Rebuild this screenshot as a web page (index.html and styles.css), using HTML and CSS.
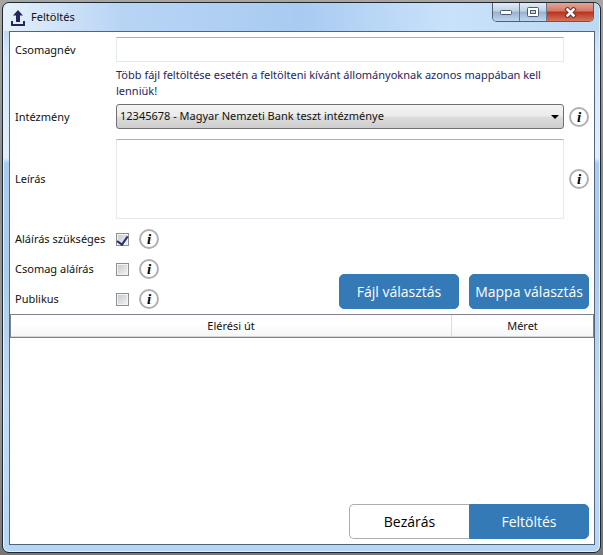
FILE: index.html
```html
<!DOCTYPE html>
<html lang="hu">
<head>
<meta charset="utf-8">
<title>Feltöltés</title>
<link rel="stylesheet" href="styles.css">
</head>
<body>
<div class="window">
  <header class="titlebar">
    <svg class="app-icon" viewBox="0 0 14 16" aria-hidden="true"><path d="M7 0 12 5.500H9V12H5V5.500H2Z M0 11H2V14H12V11H14V16H0Z" fill="#24265c"/></svg>
    <h1 class="title">Feltöltés</h1>
    <div class="controls">
      <button class="control" type="button" aria-label="Kis méret"><svg width="13" height="6" viewBox="0 0 13 6"><rect x=".5" y="1.500" width="11" height="4" rx="1" fill="#fff" stroke="#4d5a70"/></svg></button>
      <button class="control" type="button" aria-label="Teljes méret"><svg width="12" height="10" viewBox="0 0 12 10"><rect x=".5" y=".5" width="11" height="9" rx="1" fill="#fff" stroke="#4d5a70"/><rect x="3.500" y="3.500" width="5" height="3" fill="#c3d5ea" stroke="#4d5a70"/></svg></button>
      <button class="control close" type="button" aria-label="Bezárás"><svg width="13" height="11" viewBox="0 0 13 11"><path d="M3.500 2.500 9.500 8.500M9.500 2.500 3.500 8.500" stroke="#5f3438" stroke-width="4.500" stroke-linecap="square"/><path d="M3.500 2.500 9.500 8.500M9.500 2.500 3.500 8.500" stroke="#fff" stroke-width="2.500" stroke-linecap="square"/></svg></button>
    </div>
  </header>
  <main class="client">
    <form class="form">
      <label class="label" for="name">Csomagnév</label>
      <input class="field" id="name" type="text">
      <p class="hint">Több fájl feltöltése esetén a feltölteni kívánt állományoknak azonos mappában kell lenniük!</p>
      <label class="label" for="inst">Intézmény</label>
      <div class="select-wrap">
        <select class="select" id="inst"><option>12345678 - Magyar Nemzeti Bank teszt intézménye</option></select>
      </div>
      <button class="info" type="button">i</button>
      <label class="label" for="desc">Leírás</label>
      <textarea class="field area" id="desc"></textarea>
      <button class="info" type="button">i</button>
    </form>
    <div class="options">
      <div class="checks">
        <div class="check-row"><label class="label" for="sign">Aláírás szükséges</label><input class="check" id="sign" type="checkbox" checked><button class="info" type="button">i</button></div>
        <div class="check-row"><label class="label" for="pack">Csomag aláírás</label><input class="check" id="pack" type="checkbox"><button class="info" type="button">i</button></div>
        <div class="check-row"><label class="label" for="pub">Publikus</label><input class="check" id="pub" type="checkbox"><button class="info" type="button">i</button></div>
      </div>
      <div class="pickers">
        <button class="btn primary" type="button">Fájl választás</button>
        <button class="btn primary" type="button">Mappa választás</button>
      </div>
    </div>
    <table class="files">
      <thead><tr><th>Elérési út</th><th class="size">Méret</th></tr></thead>
      <tbody></tbody>
    </table>
    <footer class="actions">
      <button class="btn plain" type="button">Bezárás</button>
      <button class="btn primary" type="button">Feltöltés</button>
    </footer>
  </main>
</div>
</body>
</html>
```
FILE: styles.css
```css
* { box-sizing: border-box; }

body {
  margin: 0;
  height: 100vh;
  padding: 2px;
  background: linear-gradient(#a5a6a3, #8b8e90 30%, #9a9a98 70%, #777876);
  font: 11px/16px "Noto Sans", "Open Sans", sans-serif;
  color: #111;
}

button, input, select, textarea { font: inherit; color: inherit; margin: 0; }

.window {
  height: 100%;
  display: flex;
  flex-direction: column;
  padding: 0 5px 7px 6px;
  border: 1px solid #20272f;
  border-radius: 7px;
  background: linear-gradient(#c4dcf5 0, #b9d5f2 20px, #d3e7fa 50px, #e2eefb 155px, #a9cdf1 160px, #a9cbed 260px, #c2dcf5 400px, #b5d6f5);
  box-shadow: inset 0 0 0 1px #e4f4ff;
}

.titlebar {
  height: 28px;
  flex: none;
  display: flex;
  align-items: flex-start;
  background: linear-gradient(90deg, #e5f0fb, #b7d4f5 20%, #a9cbf1 50%, #c9e2fb 75%, #bcd8f3);
  margin: 0 -4px 0 -5px;
  padding: 0 5px;
  border-radius: 6px 6px 0 0;
}

.app-icon { width: 14px; height: 16px; margin: 7px 6px 0 2px; }
.title { margin: 6px 0 0; font-size: 11px; font-weight: 400; }

.controls {
  display: flex;
  margin-left: auto;
  border: 1px solid #515e70;
  border-top: 0;
  border-radius: 0 0 5px 5px;
  overflow: hidden;
}

.control {
  width: 27px;
  height: 18px;
  padding: 0;
  display: flex;
  align-items: center;
  justify-content: center;
  border: 0;
  border-right: 1px solid #66768b;
  background: linear-gradient(#e0ebf7, #bfd1e6 45%, #98b1cf 50%, #c0d6ef);
}

.close {
  width: 46px;
  border-right: 0;
  background: linear-gradient(#e5a695, #d37767 45%, #b7331d 50%, #d5735a);
}

.client {
  flex: 1;
  display: flex;
  flex-direction: column;
  border: 1px solid #52657a;
  background: #fff;
}

.form {
  display: grid;
  grid-template-columns: 96px 1fr 20px;
  column-gap: 5px;
  align-items: center;
  padding: 5px 5px 0;
}

.form .label { grid-column: 1; }
.form .field, .select-wrap { grid-column: 2; }

.field {
  width: 100%;
  height: 25px;
  padding: 2px 4px;
  border: 1px solid #e3e9ef;
  border-top-color: #abadb3;
  border-radius: 1px;
  background: #fff;
}

.area { height: 80px; resize: none; display: block; }

.hint {
  grid-column: 2;
  margin: 5px 0;
  line-height: 16px;
  color: #24265c;
}

.select-wrap { position: relative; margin-bottom: 10px; }

.select {
  display: block;
  width: 100%;
  height: 25px;
  padding: 0 20px 1px 3px;
  appearance: none;
  border: 1px solid #707070;
  border-radius: 3px;
  background: linear-gradient(#f3f3f3, #ebebeb 48%, #dddddd 52%, #cdcdcd);
}

.select-wrap::after {
  content: "";
  position: absolute;
  right: 5px;
  top: 11px;
  border: 4px solid transparent;
  border-top-color: #000;
  border-bottom: 0;
  pointer-events: none;
}

.select-wrap + .info, .form .label[for="inst"] { margin-bottom: 10px; }

.info {
  width: 20px;
  height: 20px;
  padding: 0;
  border: 2px solid #b0b0b0;
  border-radius: 50%;
  background: #fff;
  color: #000;
  font: italic bold 15px/16px "Liberation Serif", serif;
}

.options {
  display: flex;
  justify-content: space-between;
  align-items: flex-end;
  padding: 5px 5px 0;
}

.check-row {
  display: grid;
  grid-template-columns: 101px 13px 30px;
  height: 30px;
  align-items: center;
}

.check-row .info { margin-left: 10px; }
.check-row .label { white-space: nowrap; }

.check {
  display: grid;
  place-items: start center;
  width: 13px;
  height: 13px;
  appearance: none;
  border: 1px solid #8e8f8f;
  background: linear-gradient(135deg, #c4c8cd, #f4f4f4);
  box-shadow: inset 0 0 0 1px #f4f4f4;
}

.check:checked::before {
  content: "";
  width: 5px;
  height: 9px;
  border: solid #24307c;
  border-width: 0 2px 2px 0;
  transform: rotate(35deg);
}

.pickers { display: flex; gap: 10px; margin-bottom: 5px; }

.btn {
  width: 120px;
  height: 35px;
  padding: 0;
  border: 1px solid #337ab7;
  border-radius: 5px;
  font: 14px/20px "Open Sans", "Noto Sans", sans-serif;
  white-space: nowrap;
}

.primary { background: #337ab7; color: #fff; font-weight: 500; }

.files {
  width: 100%;
  border: 1px solid #7e828c;
  border-collapse: separate;
  border-spacing: 0;
}

.files th {
  height: 22px;
  padding: 0;
  font-weight: 400;
  border-bottom: 1px solid #d5d5d5;
  border-right: 1px solid #dcdcdc;
  background: linear-gradient(#fff 40%, #f5f6f8);
}

.files .size { width: 141px; border-right: 0; }

.actions {
  display: flex;
  justify-content: flex-end;
  margin-top: auto;
  padding: 5px;
}

.plain { border-color: #adadad; border-right: 0; border-radius: 5px 0 0 5px; background: #fff; color: #000; }
.plain + .primary { border-radius: 0 5px 5px 0; }
```
